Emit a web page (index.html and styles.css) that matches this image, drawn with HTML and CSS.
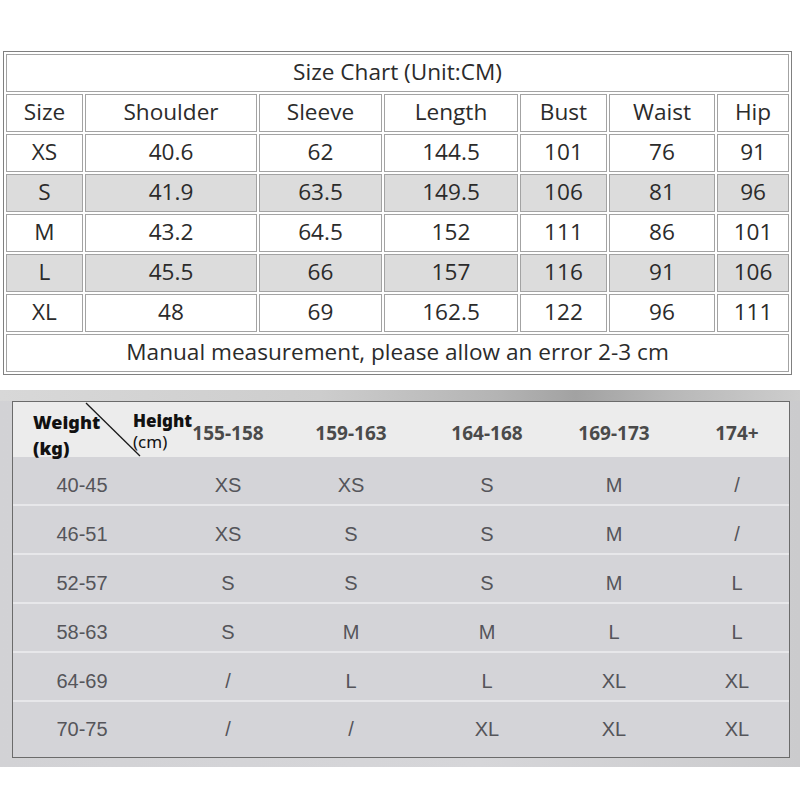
FILE: index.html
```html
<!DOCTYPE html>
<html>
<head>
<meta charset="utf-8">
<title>Size Chart</title>
<link rel="stylesheet" href="styles.css">
</head>
<body>
<div class="page">
  <table class="chart">
    <colgroup>
      <col class="w-size"><col class="w-shoulder"><col class="w-sleeve"><col class="w-length"><col class="w-bust"><col class="w-waist"><col class="w-hip">
    </colgroup>
    <tr><td colspan="7">Size Chart (Unit:CM)</td></tr>
    <tr><td>Size</td><td>Shoulder</td><td>Sleeve</td><td>Length</td><td>Bust</td><td>Waist</td><td>Hip</td></tr>
    <tr><td>XS</td><td>40.6</td><td>62</td><td>144.5</td><td>101</td><td>76</td><td>91</td></tr>
    <tr class="alt"><td>S</td><td>41.9</td><td>63.5</td><td>149.5</td><td>106</td><td>81</td><td>96</td></tr>
    <tr><td>M</td><td>43.2</td><td>64.5</td><td>152</td><td>111</td><td>86</td><td>101</td></tr>
    <tr class="alt"><td>L</td><td>45.5</td><td>66</td><td>157</td><td>116</td><td>91</td><td>106</td></tr>
    <tr><td>XL</td><td>48</td><td>69</td><td>162.5</td><td>122</td><td>96</td><td>111</td></tr>
    <tr><td colspan="7">Manual measurement, please allow an error 2-3 cm</td></tr>
  </table>

  <section class="panel">
    <div class="grid">
      <div class="row head">
        <div class="cell corner">
          <div class="weight"><b>Weight</b><br><b>(kg)</b></div>
          <svg class="diag" width="138" height="55" viewBox="0 0 138 55"><line x1="73" y1="1" x2="127" y2="54" stroke="#1a1a1a" stroke-width="1.3"/></svg>
          <div class="height"><b>Height</b><br><span>(cm)</span></div>
        </div>
        <div class="cell">155-158</div>
        <div class="cell">159-163</div>
        <div class="cell">164-168</div>
        <div class="cell">169-173</div>
        <div class="cell">174+</div>
      </div>
      <div class="row"><div class="cell">40-45</div><div class="cell">XS</div><div class="cell">XS</div><div class="cell">S</div><div class="cell">M</div><div class="cell">/</div></div>
      <div class="row"><div class="cell">46-51</div><div class="cell">XS</div><div class="cell">S</div><div class="cell">S</div><div class="cell">M</div><div class="cell">/</div></div>
      <div class="row"><div class="cell">52-57</div><div class="cell">S</div><div class="cell">S</div><div class="cell">S</div><div class="cell">M</div><div class="cell">L</div></div>
      <div class="row"><div class="cell">58-63</div><div class="cell">S</div><div class="cell">M</div><div class="cell">M</div><div class="cell">L</div><div class="cell">L</div></div>
      <div class="row"><div class="cell">64-69</div><div class="cell">/</div><div class="cell">L</div><div class="cell">L</div><div class="cell">XL</div><div class="cell">XL</div></div>
      <div class="row"><div class="cell">70-75</div><div class="cell">/</div><div class="cell">/</div><div class="cell">XL</div><div class="cell">XL</div><div class="cell">XL</div></div>
    </div>
  </section>
</div>
</body>
</html>
```

FILE: styles.css
```css
* { box-sizing: border-box; }

html, body {
  margin: 0;
  background: #ffffff;
}

.page {
  width: 800px;
  height: 800px;
  padding-top: 51px;
  overflow: hidden;
}

/* ---------- top table ---------- */
.chart {
  margin-left: 3px;
  width: 789px;
  table-layout: fixed;
  border-collapse: separate;
  border-spacing: 2px;
  border: 1px solid #808080;
  font-family: "Open Sans", "DejaVu Sans", sans-serif;
  font-size: 22.6px;
  color: #2b2b2b;
}

.chart td {
  height: 38px;
  padding: 0 0 1px;
  border: 1px solid #a3a3a3;
  text-align: center;
  vertical-align: middle;
  line-height: 1;
  background: #ffffff;
}

.chart .alt td { background: #dcdcdc; }

.w-size { width: 77px; }
.w-shoulder { width: 172px; }
.w-sleeve { width: 123px; }
.w-length { width: 134px; }
.w-bust { width: 87px; }
.w-waist { width: 106px; }
.w-hip { width: 72px; }

/* ---------- bottom panel ---------- */
.panel {
  margin-top: 15px;
  height: 377px;
  padding: 11px 10px 10px 12px;
  background:
    linear-gradient(to right, #d8d8d8 0%, #cdcdcd 40%, #b4b4b4 62%, #a2a2a2 72%, #b8b8b8 84%, #cdcdcd 100%) top left / 100% 11px no-repeat,
    linear-gradient(to right, #d2d2d5 0%, #d6d6d9 60%, #cbcbcd 100%);
}

.grid {
  border: 1px solid #6b6b6b;
  background: #d4d4d8;
  font-family: "Liberation Sans", Arial, sans-serif;
  font-size: 20px;
  color: #55555a;
}

.row {
  display: grid;
  grid-template-columns: 138px 154px 92px 180px 74px 138px;
  align-items: center;
  height: 49px;
  padding-top: 10px;
  border-bottom: 2px solid #e7e7ea;
}

.row:last-child {
  height: 55px;
  padding: 4px 0;
  border-bottom: 0;
}

.cell {
  text-align: center;
  white-space: nowrap;
}

.cell:last-child { padding-left: 34px; }

.row.head {
  height: 55px;
  padding-top: 6px;
  border-bottom: 0;
  background: #ececec;
  font-family: "Noto Sans", "Liberation Sans", sans-serif;
  font-weight: 700;
  font-size: 19px;
  color: #4a4a4a;
}

.corner {
  position: relative;
  height: 55px;
  margin-top: -6px;
  text-align: left;
}

.weight {
  position: absolute;
  left: 20px;
  top: 7px;
  line-height: 26px;
  font-size: 18px;
  color: #111111;
}

.height {
  position: absolute;
  left: 120px;
  top: 8px;
  line-height: 21px;
  font-size: 17px;
  color: #111111;
}

.height span { font-weight: 400; }

.diag {
  position: absolute;
  left: 0;
  top: 0;
}
```
